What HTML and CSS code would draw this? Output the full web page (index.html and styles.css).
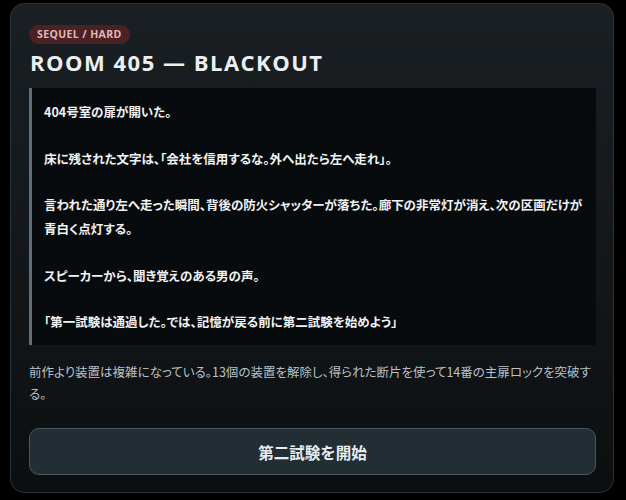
FILE: index.html
```html
<!DOCTYPE html>
<html lang="ja">
<head>
<meta charset="utf-8">
<link rel="stylesheet" href="styles.css">
</head>
<body>
<div class="card">
  <span class="badge">SEQUEL / HARD</span>
  <h1 class="title">ROOM 405 — BLACKOUT</h1>
  <div class="story">
    <p>404号室の扉が開いた。</p>
    <p>床に残された文字は、「会社を信用するな。外へ出たら左へ走れ」。</p>
    <p>言われた通り左へ走った瞬間、背後の防火シャッターが落ちた。廊下の非常灯が消え、次の区画だけが青白く点灯する。</p>
    <p>スピーカーから、聞き覚えのある男の声。</p>
    <p>「第一試験は通過した。では、記憶が戻る前に第二試験を始めよう」</p>
  </div>
  <p class="desc">前作より装置は複雑になっている。13個の装置を解除し、得られた断片を使って14番の主扉ロックを突破する。</p>
  <button class="start">第二試験を開始</button>
</div>
</body>
</html>
```

FILE: styles.css
```css
html, body {
  margin: 0;
  padding: 0;
  background: #000;
}
body {
  font-family: "Open Sans", "Noto Sans CJK JP", sans-serif;
  padding: 3px 0 0 10px;
}
.card {
  width: 604px;
  height: 490px;
  box-sizing: border-box;
  border: 1px solid #2b3238;
  border-radius: 14px;
  background: linear-gradient(180deg, #1a1f23 0%, #121619 60%, #0c0f11 100%);
  padding: 21px 17px 17px 18px;
  display: flex;
  flex-direction: column;
  align-items: flex-start;
}
.badge {
  display: inline-block;
  background: #4a2226;
  color: #e3b6b6;
  font-size: 10.5px;
  font-weight: 700;
  letter-spacing: 0.4px;
  line-height: 19px;
  padding: 0 8px;
  border-radius: 10px;
}
.title {
  margin: 4px 0 0 1px;
  font-size: 22px;
  font-weight: 700;
  letter-spacing: 1.5px;
  line-height: 28px;
  color: #eceff1;
}
.story {
  align-self: stretch;
  margin-top: 12px;
  background: #080b0e;
  border-left: 3px solid #5f6e78;
  padding: 12px 6px 11px 12px;
  font-family: "Noto Sans CJK JP", sans-serif;
  font-feature-settings: "palt";
  font-size: 12.5px;
  font-weight: 700;
  line-height: 24px;
  color: #f0f2f3;
}
.story p {
  margin: 0 0 22.5px;
}
.story p:last-child {
  margin-bottom: 0;
}
.desc {
  margin: 16px 0 0;
  font-family: "Noto Sans CJK JP", sans-serif;
  font-feature-settings: "palt";
  font-size: 12.5px;
  line-height: 22px;
  color: #b9c1c7;
  align-self: stretch;
}
.start {
  align-self: stretch;
  margin-top: 23px;
  height: 48px;
  background: #232d34;
  border: 1px solid #4a5660;
  border-radius: 10px;
  color: #e8ecee;
  font-family: "Noto Sans CJK JP", sans-serif;
  font-size: 15.5px;
  font-weight: 700;
  cursor: pointer;
}
```
